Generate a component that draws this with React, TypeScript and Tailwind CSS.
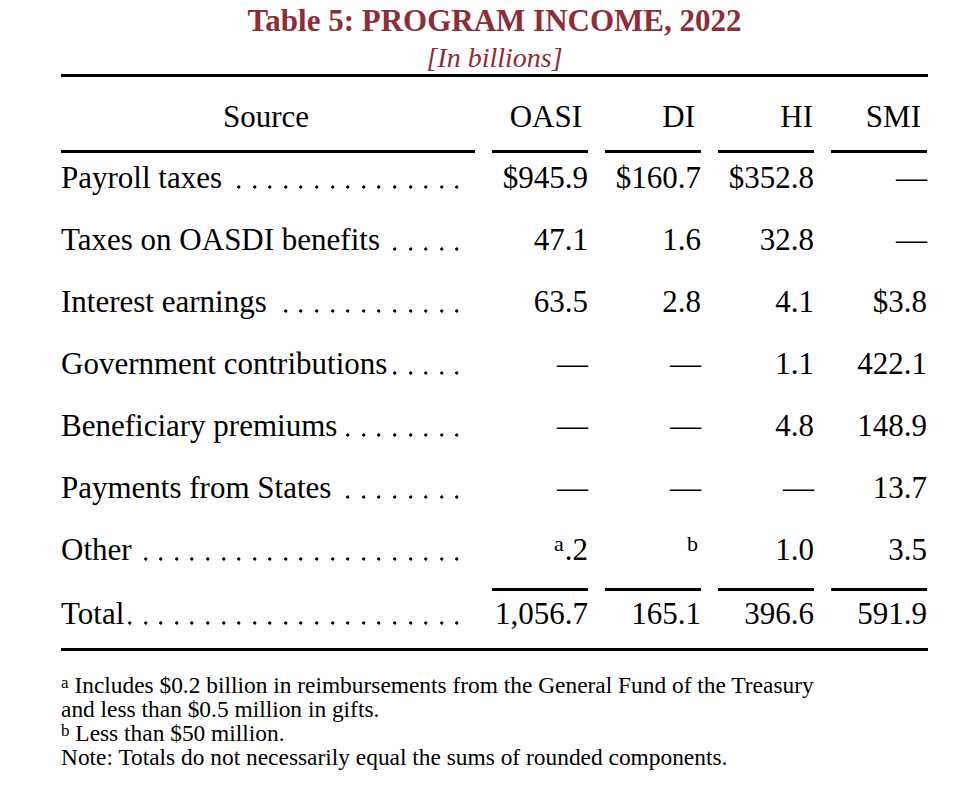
import React from "react";

const serif = { fontFamily: '"Liberation Serif", "Times New Roman", serif' };

type Row = { label: string; vals: React.ReactNode[] };

const dash = "\u2014";

const rows: Row[] = [
  { label: "Payroll taxes", vals: ["$945.9", "$160.7", "$352.8", dash] },
  { label: "Taxes on OASDI benefits", vals: ["47.1", "1.6", "32.8", dash] },
  { label: "Interest earnings", vals: ["63.5", "2.8", "4.1", "$3.8"] },
  { label: "Government contributions", vals: [dash, dash, "1.1", "422.1"] },
  { label: "Beneficiary premiums", vals: [dash, dash, "4.8", "148.9"] },
  { label: "Payments from States", vals: [dash, dash, dash, "13.7"] },
  {
    label: "Other",
    vals: [
      <span key="a">
        <span className="relative top-[-9px] text-[22px] mr-[1px]">a</span>.2
      </span>,
      <span key="b" className="relative top-[-9px] text-[22px] pr-[3px]">b</span>,
      "1.0",
      "3.5",
    ],
  },
];

const dotKeys = Array.from({ length: 30 }, (_, i) => i);

function Label({ text }: { text: string }) {
  return (
    <div className="flex pr-[10px] whitespace-nowrap">
      <span>{text}</span>
      <span className="flex-1 ml-[-4px] h-[36px] overflow-hidden flex flex-row-reverse flex-wrap">
        {dotKeys.map((k) => (
          <span
            key={k}
            className="shrink-0 w-[15.6px] h-[36px] bg-[radial-gradient(circle_at_7.8px_27px,#000_1.3px,transparent_1.9px)]"
          />
        ))}
      </span>
    </div>
  );
}

const grid = "grid grid-cols-[414px_96px_96px_96px_96px] gap-x-[17px]";

export default function App() {
  return (
    <div className="w-[968px] h-[808px] bg-white text-black" style={serif}>
      <div className="pl-[61px] w-[928px]">
        <div className="text-center pt-[3px]">
          <div className="text-[31px] font-bold leading-[36px] text-[#8c2d37]">
            Table 5: PROGRAM INCOME, 2022
          </div>
          <div className="text-[28px] italic leading-[30px] text-[#8c2d37] mt-[4px]">
            [In billions]
          </div>
        </div>
        <div className="h-[3px] bg-black mt-[1px]" />
        <div className={`${grid} text-[31px] leading-[36px] mt-[22px]`}>
          <div className="text-center pr-[4px]">Source</div>
          <div className="text-right pr-[6px]">OASI</div>
          <div className="text-right pr-[6px]">DI</div>
          <div className="text-right pr-[1px]">HI</div>
          <div className="text-right pr-[6px]">SMI</div>
        </div>
        <div className={`${grid} mt-[15px]`}>
          <div className="h-[3px] bg-black" />
          <div className="h-[3px] bg-black" />
          <div className="h-[3px] bg-black" />
          <div className="h-[3px] bg-black" />
          <div className="h-[3px] bg-black" />
        </div>
        <div className={`${grid} gap-y-[26px] text-[31px] leading-[36px] mt-[7px]`}>
          {rows.map((r) => (
            <React.Fragment key={r.label}>
              <Label text={r.label} />
              {r.vals.map((v, i) => (
                <div key={i} className="text-right whitespace-nowrap">
                  {v}
                </div>
              ))}
            </React.Fragment>
          ))}
        </div>
        <div className={`${grid} mt-[17px]`}>
          <div />
          <div className="h-[3px] bg-black" />
          <div className="h-[3px] bg-black" />
          <div className="h-[3px] bg-black" />
          <div className="h-[3px] bg-black" />
        </div>
        <div className={`${grid} text-[31px] leading-[36px] mt-[5px]`}>
          <Label text="Total" />
          <div className="text-right">1,056.7</div>
          <div className="text-right">165.1</div>
          <div className="text-right">396.6</div>
          <div className="text-right">591.9</div>
        </div>
        <div className="h-[3px] bg-black mt-[16px] w-[867px]" />
        <div className="text-[23.4px] mt-[22px]">
          <div className="leading-[24px] h-[24px]">
            <span className="relative top-[-5px] text-[17px] leading-[17px]">a</span> Includes $0.2 billion in reimbursements from the General Fund of the Treasury
          </div>
          <div className="leading-[24px] h-[24px]">and less than $0.5 million in gifts.</div>
          <div className="leading-[24px] h-[24px]">
            <span className="relative top-[-5px] text-[17px] leading-[17px]">b</span> Less than $50 million.
          </div>
          <div className="leading-[24px] h-[24px]">Note: Totals do not necessarily equal the sums of rounded components.</div>
        </div>
      </div>
    </div>
  );
}
